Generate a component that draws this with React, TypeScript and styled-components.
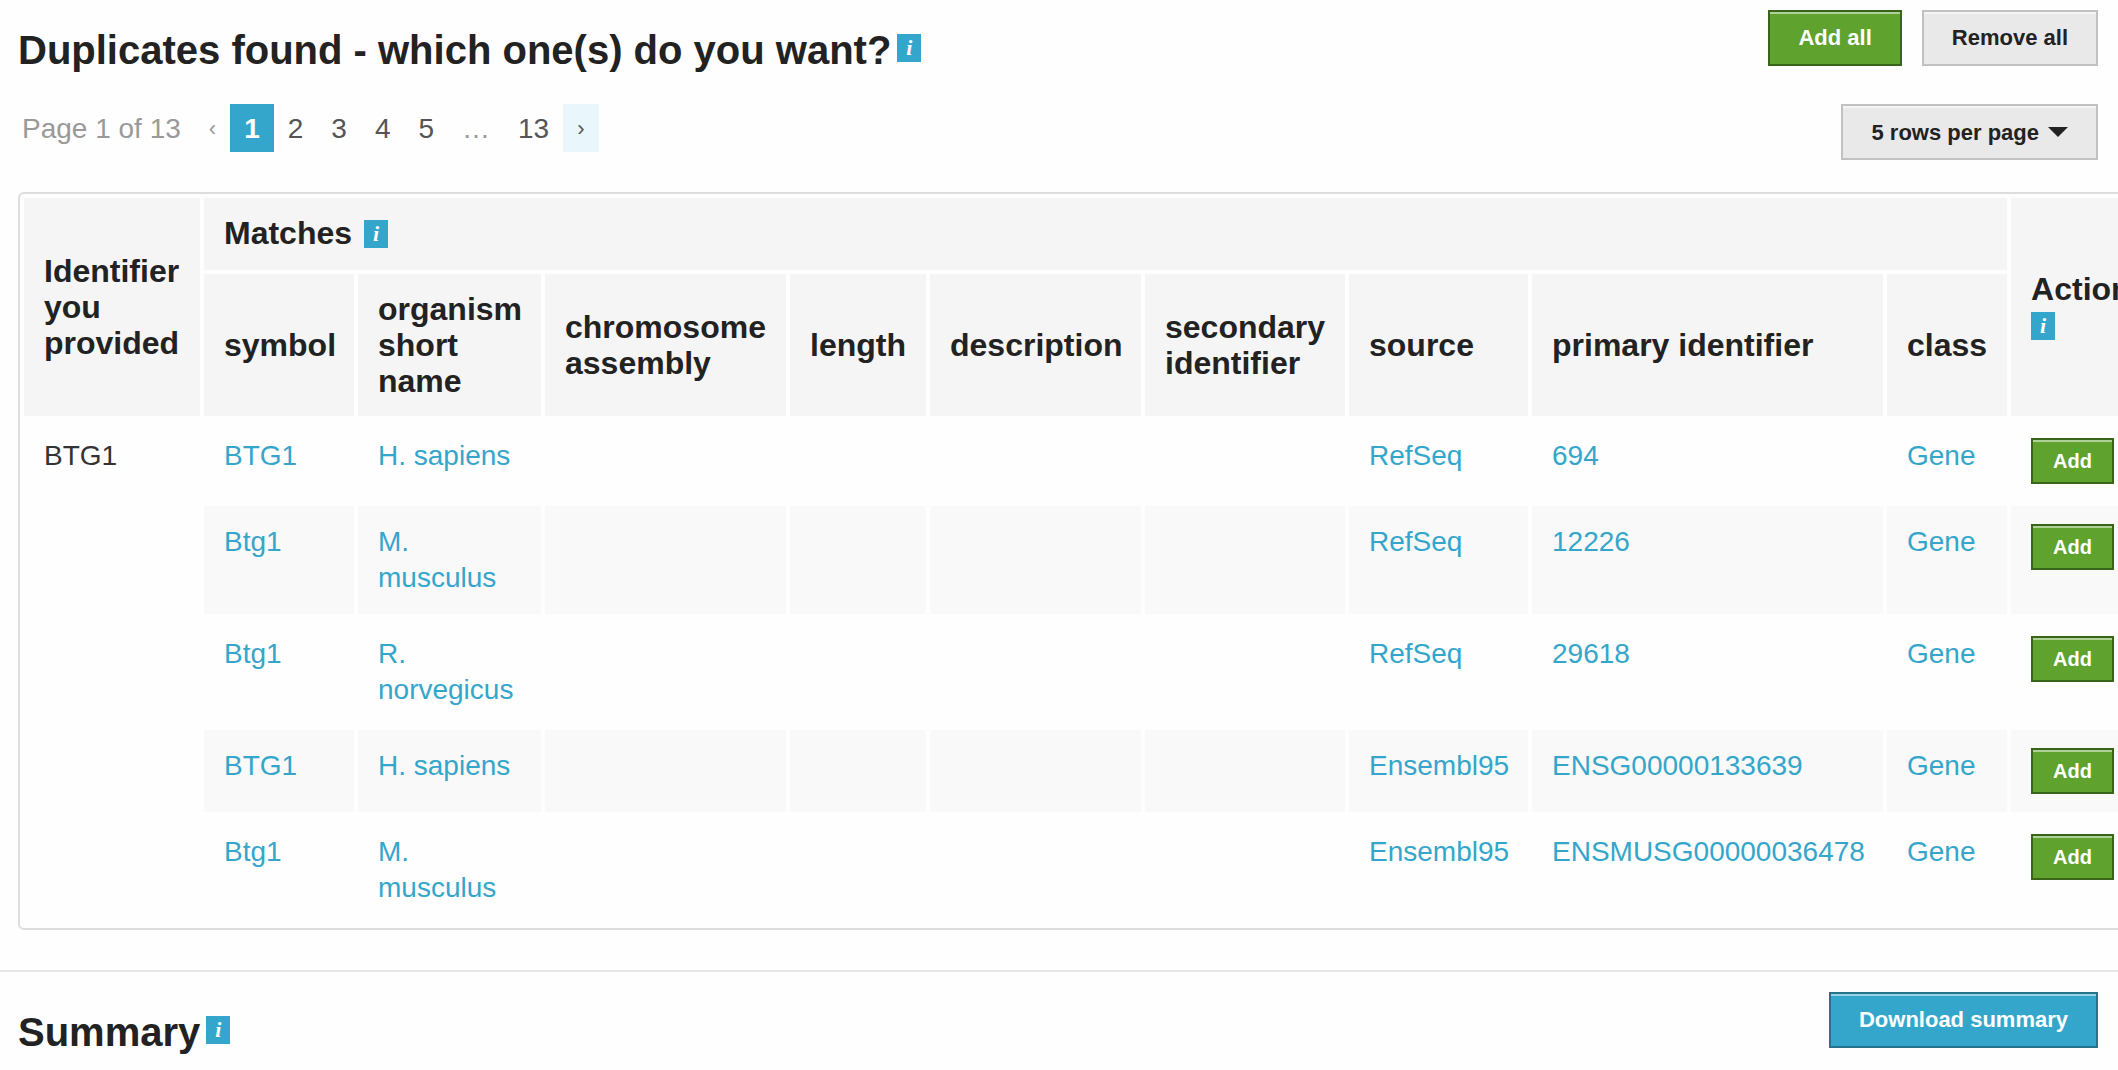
import React from "react";
import styled, { createGlobalStyle, css } from "styled-components";

const color = {
  page: "#fefefe",
  ink: "#222222",
  text: "#333333",
  muted: "#999999",
  blue: "#35a6cb",
  blueEdge: "#26738c",
  blueTint: "#e9f6fb",
  green: "#5fa32e",
  greenEdge: "#3a6519",
  grey: "#e9e9e9",
  greyEdge: "#c1c1c1",
  head: "#f5f5f5",
  stripe: "#f9f9f9",
  frame: "#dddddd",
  rule: "#e6e6e6",
};

const GlobalStyle = createGlobalStyle`
  *, *::before, *::after { box-sizing: border-box; }
  body {
    margin: 0;
    background: ${color.page};
    color: ${color.text};
    font-family: "Liberation Sans", Arial, sans-serif;
    font-size: 28px;
    line-height: 36px;
    overflow-x: hidden;
  }
`;

const Section = styled.section<{ $ruled?: boolean }>`
  padding: ${(p) => (p.$ruled ? 20 : 10)}px 20px ${(p) => (p.$ruled ? 20 : 40)}px 18px;
  ${(p) => p.$ruled && css`border-top: 2px solid ${color.rule};`}
`;

const Bar = styled.div`
  display: flex;
  justify-content: space-between;
  align-items: flex-start;
  margin-bottom: 32px;
`;

const HeadingBar = styled(Bar)`
  height: 62px;
`;

const Heading = styled.h2`
  display: flex;
  align-items: center;
  gap: 6px;
  margin: 18px 0 0;
  color: ${color.ink};
  font-size: 40px;
  line-height: 44px;
`;

const Info = styled.button`
  flex: none;
  width: 24px;
  height: 28px;
  margin: 5px 0 3px;
  padding: 0;
  border: 0;
  background: ${color.blue};
  color: #fff;
  font: italic bold 22px/28px "Liberation Serif", "Times New Roman", serif;
  cursor: pointer;

  ${Heading} & {
    margin: 0 0 4px;
  }
`;

const Actions = styled.div`
  display: flex;
  gap: 20px;
`;

type Tone = "green" | "grey" | "blue";

const tones = {
  green: css`
    background: ${color.green};
    border-color: ${color.greenEdge};
    color: #fff;
  `,
  grey: css`
    background: ${color.grey};
    border-color: ${color.greyEdge};
    color: ${color.ink};
  `,
  blue: css`
    background: ${color.blue};
    border-color: ${color.blueEdge};
    color: #fff;
  `,
};

const control = css`
  border: 2px solid;
  border-radius: 0;
  box-shadow: inset 0 2px 0 rgba(255, 255, 255, 0.5);
  font-family: inherit;
  font-weight: bold;
  white-space: nowrap;
  cursor: pointer;
`;

const Button = styled.button<{ $tone: Tone; $small?: boolean }>`
  ${control}
  display: block;
  height: ${(p) => (p.$small ? 46 : 56)}px;
  padding: 0 ${(p) => (p.$small ? 20 : 28)}px;
  font-size: ${(p) => (p.$small ? 20 : 22)}px;
  ${(p) => tones[p.$tone]}
`;

const SelectBox = styled.div`
  display: grid;
  align-items: center;

  > * {
    grid-area: 1 / 1;
  }
`;

const Select = styled.select`
  ${control}
  ${tones.grey}
  appearance: none;
  field-sizing: content;
  height: 56px;
  padding: 0 57px 0 28px;
  font-size: 22px;
`;

const Caret = styled.svg`
  justify-self: end;
  width: 20px;
  height: 10px;
  margin-right: 30px;
  pointer-events: none;
`;

const Pages = styled.ul`
  display: flex;
  margin: 0;
  padding: 0;
  list-style: none;
  line-height: 50px;
`;

const PageNote = styled.li`
  padding: 0 14px 0 4px;
  color: ${color.muted};
`;

const PageLink = styled.a<{ $current?: boolean; $arrow?: boolean; $hot?: boolean; $off?: boolean }>`
  display: block;
  height: 48px;
  padding: 0 14px;
  color: ${(p) => (p.$current ? "#fff" : p.$off ? color.muted : "#555555")};
  background: ${(p) => (p.$current ? color.blue : p.$hot ? color.blueTint : "transparent")};
  font-size: ${(p) => (p.$arrow ? 22 : 28)}px;
  font-weight: ${(p) => (p.$current ? "bold" : "normal")};
  text-decoration: none;
`;

const columnWidths = [176, 150, 183, 241, 136, 211, 200, 179, 351, 120, 142];
const spacing = 4;
const tableWidth =
  columnWidths.reduce((sum, w) => sum + w, 0) + spacing * (columnWidths.length + 1) + 4;

const Table = styled.table`
  width: ${tableWidth}px;
  table-layout: fixed;
  border: 2px solid ${color.frame};
  border-radius: 6px;
  border-collapse: separate;
  border-spacing: ${spacing}px;
`;

const Th = styled.th<{ $group?: boolean }>`
  padding: 17px 20px ${(p) => (p.$group ? 19 : 17)}px;
  background: ${color.head};
  color: ${color.ink};
  font-size: 32px;
  text-align: left;
  vertical-align: middle;
`;

const ThLabel = styled.span`
  display: flex;
  flex-wrap: wrap;
  align-items: center;
  column-gap: 12px;
`;

const Td = styled.td<{ $striped?: boolean }>`
  padding: 18px 20px;
  background: ${(p) => (p.$striped ? color.stripe : "transparent")};
  vertical-align: top;
`;

const Link = styled.a`
  color: ${color.blue};
  text-decoration: none;
`;

const fields = [
  "symbol",
  "organism short name",
  "chromosome assembly",
  "length",
  "description",
  "secondary identifier",
  "source",
  "primary identifier",
  "class",
];

const matches = [
  ["BTG1", "H. sapiens", "", "", "", "", "RefSeq", "694", "Gene"],
  ["Btg1", "M. musculus", "", "", "", "", "RefSeq", "12226", "Gene"],
  ["Btg1", "R. norvegicus", "", "", "", "", "RefSeq", "29618", "Gene"],
  ["BTG1", "H. sapiens", "", "", "", "", "Ensembl95", "ENSG00000133639", "Gene"],
  ["Btg1", "M. musculus", "", "", "", "", "Ensembl95", "ENSMUSG00000036478", "Gene"],
];

function InfoButton({ about }: { about: string }) {
  return (
    <Info type="button" aria-label={`About ${about}`}>
      i
    </Info>
  );
}

function Pagination() {
  return (
    <nav aria-label="Pages">
      <Pages>
        <PageNote>Page 1 of 13</PageNote>
        <li><PageLink $arrow $off aria-disabled="true">‹</PageLink></li>
        <li><PageLink href="#1" $current aria-current="page">1</PageLink></li>
        {[2, 3, 4, 5].map((n) => (
          <li key={n}><PageLink href={`#${n}`}>{n}</PageLink></li>
        ))}
        <li><PageLink as="span" $off>…</PageLink></li>
        <li><PageLink href="#13">13</PageLink></li>
        <li><PageLink href="#2" $arrow $hot aria-label="Next page">›</PageLink></li>
      </Pages>
    </nav>
  );
}

function MatchesTable() {
  return (
    <Table>
      <colgroup>
        {columnWidths.map((w, i) => (
          <col key={i} style={{ width: w }} />
        ))}
      </colgroup>
      <thead>
        <tr>
          <Th rowSpan={2}>Identifier you provided</Th>
          <Th colSpan={fields.length} $group>
            <ThLabel>Matches <InfoButton about="matches" /></ThLabel>
          </Th>
          <Th rowSpan={2}>
            <ThLabel>Action <InfoButton about="actions" /></ThLabel>
          </Th>
        </tr>
        <tr>
          {fields.map((f) => (
            <Th key={f}>{f}</Th>
          ))}
        </tr>
      </thead>
      <tbody>
        {matches.map((row, r) => {
          const striped = r % 2 === 1;
          return (
            <tr key={r}>
              {r === 0 && <Td rowSpan={matches.length}>BTG1</Td>}
              {row.map((value, c) => (
                <Td key={c} $striped={striped}>
                  {value && <Link href="#report">{value}</Link>}
                </Td>
              ))}
              <Td $striped={striped}>
                <Button type="button" $tone="green" $small>Add</Button>
              </Td>
            </tr>
          );
        })}
      </tbody>
    </Table>
  );
}

export default function App() {
  return (
    <>
      <GlobalStyle />
      <main>
        <Section>
          <HeadingBar>
            <Heading>
              Duplicates found - which one(s) do you want?
              <InfoButton about="duplicates" />
            </Heading>
            <Actions>
              <Button type="button" $tone="green">Add all</Button>
              <Button type="button" $tone="grey">Remove all</Button>
            </Actions>
          </HeadingBar>
          <Bar>
            <Pagination />
            <SelectBox>
              <Select aria-label="Rows per page" defaultValue="5">
                <option value="5">5 rows per page</option>
                <option value="10">10 rows per page</option>
                <option value="20">20 rows per page</option>
              </Select>
              <Caret viewBox="0 0 20 10" aria-hidden="true">
                <path d="M0 0H20L10 10Z" fill={color.ink} />
              </Caret>
            </SelectBox>
          </Bar>
          <MatchesTable />
        </Section>
        <Section $ruled>
          <HeadingBar>
            <Heading>
              Summary
              <InfoButton about="the summary" />
            </Heading>
            <Button type="button" $tone="blue">Download summary</Button>
          </HeadingBar>
        </Section>
      </main>
    </>
  );
}
